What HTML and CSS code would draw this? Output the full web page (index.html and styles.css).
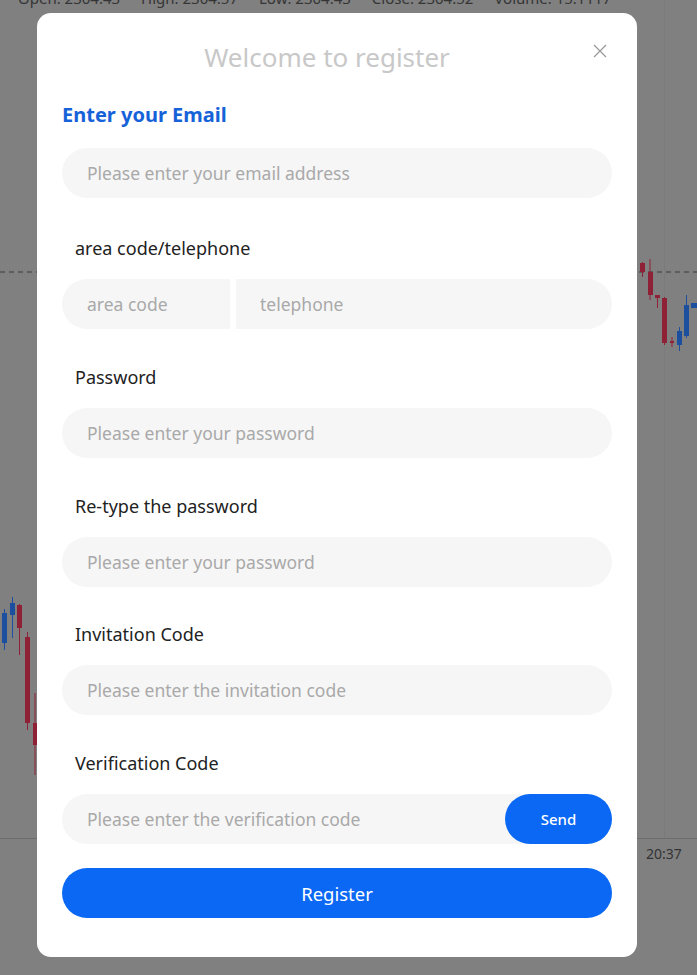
FILE: index.html
```html
<!DOCTYPE html>
<html lang="en">
<head>
<meta charset="utf-8">
<title>Welcome to register</title>
<link rel="stylesheet" href="styles.css">
</head>
<body>
<div class="chart">
  <div class="chart-stats">
    <span>Open: 2304.43</span><span>High: 2304.57</span><span>Low: 2304.43</span><span>Close: 2304.52</span><span>Volume: 15.1117</span>
  </div>
  <svg class="chart-svg" width="697" height="975" viewBox="0 0 697 975">
    <line x1="0" y1="272" x2="697" y2="272" stroke="#3a3a3a" stroke-width="1" stroke-dasharray="5 4"/>
    <line x1="0" y1="838.5" x2="697" y2="838.5" stroke="#6c6c6c" stroke-width="1"/>
    <line x1="664.5" y1="0" x2="664.5" y2="838" stroke="#7b7b7b" stroke-width="1"/>
    <g class="red">
      <line x1="642.5" y1="262" x2="642.5" y2="277"/><rect x="640" y="263" width="5" height="9"/>
      <line x1="650" y1="259" x2="650" y2="300"/><rect x="648" y="272" width="5" height="23"/>
      <line x1="657.5" y1="295" x2="657.5" y2="308"/><rect x="655" y="295" width="5" height="3"/>
      <line x1="664.5" y1="297" x2="664.5" y2="345"/><rect x="662" y="298" width="5" height="45"/>
      <line x1="672" y1="337" x2="672" y2="347"/><rect x="670" y="341" width="4" height="2"/>
      <line x1="19.5" y1="604" x2="19.5" y2="655"/><rect x="17" y="605" width="5" height="23"/>
      <line x1="27.5" y1="632" x2="27.5" y2="730"/><rect x="25" y="637" width="5" height="86"/>
      <line x1="35" y1="693" x2="35" y2="775"/><rect x="33" y="723" width="4" height="22"/>
    </g>
    <g class="blue">
      <line x1="679.5" y1="327" x2="679.5" y2="351"/><rect x="677" y="331" width="5" height="14"/>
      <line x1="686.5" y1="295" x2="686.5" y2="338"/><rect x="684" y="305" width="5" height="31"/>
      <rect x="691" y="303" width="6" height="5"/>
      <line x1="4.5" y1="609" x2="4.5" y2="650"/><rect x="2" y="613" width="5" height="30"/>
      <line x1="12.5" y1="597" x2="12.5" y2="638"/><rect x="10" y="603" width="5" height="12"/>
    </g>
    <text x="646" y="859" class="axis">20:37</text>
  </svg>
</div>

<div class="mask">
  <div class="modal">
    <div class="modal-head">
      <h2 class="modal-title">Welcome to register</h2>
      <button class="modal-close" type="button" aria-label="Close">
        <svg width="14" height="14" viewBox="0 0 14 14"><path d="M1 1 L13 13 M13 1 L1 13" stroke="#9a9a9a" stroke-width="1.3" fill="none"/></svg>
      </button>
    </div>

    <h3 class="section-title">Enter your Email</h3>
    <input class="field" type="text" placeholder="Please enter your email address">

    <div class="group group-first">
      <div class="label">area code/telephone</div>
      <div class="phone-row">
        <input class="field field-area" type="text" placeholder="area code">
        <input class="field field-tel" type="text" placeholder="telephone">
      </div>
    </div>

    <div class="group">
      <div class="label">Password</div>
      <input class="field" type="password" placeholder="Please enter your password">
    </div>

    <div class="group">
      <div class="label">Re-type the password</div>
      <input class="field" type="password" placeholder="Please enter your password">
    </div>

    <div class="group group-tight">
      <div class="label">Invitation Code</div>
      <input class="field" type="text" placeholder="Please enter the invitation code">
    </div>

    <div class="group">
      <div class="label">Verification Code</div>
      <div class="code-row">
        <input class="field field-code" type="text" placeholder="Please enter the verification code">
        <button class="send-btn" type="button">Send</button>
      </div>
    </div>

    <button class="register-btn" type="button">Register</button>
  </div>
</div>
</body>
</html>
```

FILE: styles.css
```css
* { box-sizing: border-box; }

html, body {
  margin: 0;
  padding: 0;
}

body {
  width: 697px;
  height: 975px;
  overflow: hidden;
  position: relative;
  background: #808080;
  font-family: "Noto Sans", "Open Sans", sans-serif;
}

.chart {
  position: absolute;
  left: 0;
  top: 0;
  width: 697px;
  height: 975px;
}

.chart-svg {
  position: absolute;
  left: 0;
  top: 0;
}

.chart-svg .red rect { fill: #8e2136; }
.chart-svg .red line { stroke: #8e2136; stroke-width: 1; }
.chart-svg .blue rect { fill: #1d4f9f; }
.chart-svg .blue line { stroke: #1d4f9f; stroke-width: 1; }
.chart-svg .axis {
  font-family: "Noto Sans", sans-serif;
  font-size: 14px;
  fill: #333333;
}

.chart-stats {
  position: absolute;
  left: 18px;
  top: -12px;
  display: flex;
  gap: 21px;
  font-size: 15px;
  line-height: 20px;
  color: #353535;
  white-space: nowrap;
}

.mask {
  position: relative;
  display: flex;
  justify-content: flex-start;
  padding: 13px 0 0 37px;
}

.modal {
  width: 600px;
  height: 944px;
  background: #ffffff;
  border-radius: 14px;
  padding: 26px 25px 0;
  display: flex;
  flex-direction: column;
}

.modal-head {
  position: relative;
}

.modal-title {
  margin: 0;
  padding-right: 20px;
  text-align: center;
  font-size: 26px;
  line-height: 36px;
  font-weight: 400;
  color: #c8c8c8;
}

.modal-close {
  position: absolute;
  right: 2px;
  top: 2px;
  width: 20px;
  height: 20px;
  padding: 0;
  border: 0;
  background: transparent;
  display: flex;
  align-items: center;
  justify-content: center;
}

.section-title {
  margin: 26px 0 19px;
  font-size: 20px;
  line-height: 28px;
  font-weight: 700;
  color: #1662d8;
}

.field {
  display: block;
  width: 100%;
  height: 50px;
  border: 0;
  outline: 0;
  border-radius: 25px;
  background: #f6f6f6;
  padding: 0 25px;
  font-family: inherit;
  font-size: 17.5px;
  color: #333;
}

.field::placeholder {
  color: #a9a9a9;
}

.group {
  margin-top: 36px;
  display: flex;
  flex-direction: column;
}

.group-first {
  margin-top: 38px;
}

.group-tight {
  margin-top: 35px;
}

.label {
  padding-left: 13px;
  margin-bottom: 19px;
  font-size: 18px;
  line-height: 24px;
  color: #222222;
}

.phone-row {
  display: flex;
  gap: 6px;
}

.field-area {
  width: 168px;
  flex: none;
  border-radius: 25px 0 0 25px;
}

.field-tel {
  flex: 1;
  border-radius: 0 25px 25px 0;
  padding-left: 24px;
}

.code-row {
  display: flex;
  background: #f6f6f6;
  border-radius: 25px;
}

.field-code {
  flex: 1;
  background: transparent;
}

.send-btn {
  flex: none;
  width: 107px;
  height: 50px;
  border: 0;
  border-radius: 25px;
  background: #0a68f4;
  color: #ffffff;
  font-family: inherit;
  font-size: 15px;
  font-weight: 500;
}

.register-btn {
  margin-top: 24px;
  width: 100%;
  height: 50px;
  border: 0;
  border-radius: 25px;
  background: #0a68f4;
  color: #ffffff;
  font-family: inherit;
  font-size: 18.5px;
}
```
